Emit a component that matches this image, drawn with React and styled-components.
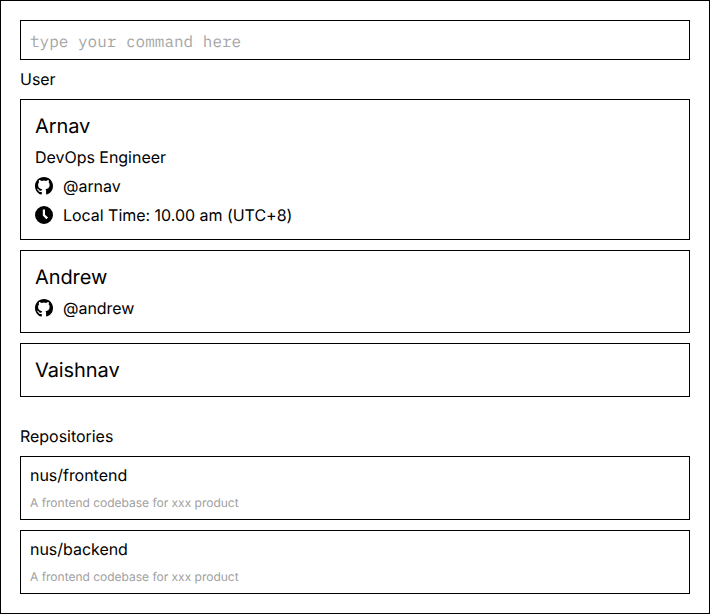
import React from "react";
import styled, { createGlobalStyle } from "styled-components";

const GlobalStyle = createGlobalStyle`
  * { box-sizing: border-box; }
  body { margin: 0; background: #fff; }
`;

const Page = styled.main`
  width: 710px;
  height: 614px;
  padding: 19px;
  border: 1px solid #000;
  background: #fff;
  color: #000;
  font: 400 16px/19px Inter, sans-serif;
  letter-spacing: -0.03px;
  text-rendering: geometricPrecision;
`;

const CommandInput = styled.input`
  display: block;
  width: 100%;
  height: 40px;
  padding: 4px 9px 0;
  border: 1px solid #000;
  border-radius: 0;
  outline: none;
  background: #fff;
  font: 400 16px/21px "IBM Plex Mono", "Liberation Mono", monospace;
  text-rendering: geometricPrecision;
  &::placeholder { color: #a6a6a6; opacity: 1; }
`;

const Section = styled.section`
  margin-top: ${(p) => p.$gap}px;
`;

const SectionTitle = styled.h2`
  margin: 0 0 10px;
  font: inherit;
`;

const List = styled.div`
  display: grid;
  gap: 10px;
`;

const UserCard = styled.article`
  display: flex;
  flex-direction: column;
  gap: 10px;
  padding: 14px;
  border: 1px solid #000;
`;

const UserName = styled.h3`
  margin: 0;
  font-size: 20px;
  font-weight: 400;
  line-height: 24px;
  letter-spacing: -0.08px;
`;

const Detail = styled.div`
  display: flex;
  align-items: flex-start;
  gap: 10px;
  height: 19px;
`;

const Icon = styled.svg`
  width: 18px;
  height: 18px;
  flex: none;
  fill: #000;
`;

const RepoCard = styled.article`
  height: 64px;
  padding: 9px;
  border: 1px solid #000;
`;

const RepoName = styled.h3`
  margin: 0 0 10px;
  font: inherit;
`;

const RepoText = styled.p`
  margin: 0;
  color: #a0a0a0;
  font-size: 12px;
  line-height: 15px;
  letter-spacing: -0.01px;
`;

const GithubIcon = () => (
  <Icon viewBox="0 0 18 18">
    <path d="M9 0C3.9 0 0 3.9 0 8.9c0 4 2.6 7.5 6.2 8.7.5.1.6-.2.6-.5v-2.2c-2.5.5-3.1-.7-3.3-1.2-.2-.4-.6-1.1-1-1.3-.3-.2-.8-.6 0-.6.7 0 1.2.7 1.4.9.8 1.4 2.1 1 2.7.7.1-.6.3-1 .6-1.2-2-.3-4.1-1-4.1-4.4 0-1 .3-1.8.9-2.4-.1-.3-.4-1.2.1-2.4 0 0 .8-.2 2.5.9a8.3 8.3 0 0 1 4.5 0c1.7-1.2 2.5-.9 2.5-.9.5 1.2.2 2.1.1 2.4.6.6.9 1.4.9 2.4 0 3.4-2.1 4.2-4.1 4.4.3.3.6.8.6 1.6v3.3c0 .3.2.6.7.5A9 9 0 0 0 18 8.9C18 3.9 14 0 9 0z" />
  </Icon>
);

const ClockIcon = () => (
  <Icon viewBox="0 0 18 18">
    <path fillRule="evenodd" d="M9 0a9 9 0 1 1 0 18A9 9 0 0 1 9 0zM7.8 3.5v6.1l3.5 3.7 1.8-1.8L10 8.7V3.5z" />
  </Icon>
);

const users = [
  { name: "Arnav", role: "DevOps Engineer", github: "@arnav", time: "Local Time: 10.00 am (UTC+8)" },
  { name: "Andrew", github: "@andrew" },
  { name: "Vaishnav" },
];

const repos = [
  { name: "nus/frontend", text: "A frontend codebase for xxx product" },
  { name: "nus/backend", text: "A frontend codebase for xxx product" },
];

export default function App() {
  return (
    <Page>
      <GlobalStyle />
      <CommandInput placeholder="type your command here" />
      <Section $gap={10}>
        <SectionTitle>User</SectionTitle>
        <List>
          {users.map((u) => (
            <UserCard key={u.name}>
              <UserName>{u.name}</UserName>
              {u.role && <Detail>{u.role}</Detail>}
              {u.github && <Detail><GithubIcon />{u.github}</Detail>}
              {u.time && <Detail><ClockIcon />{u.time}</Detail>}
            </UserCard>
          ))}
        </List>
      </Section>
      <Section $gap={30}>
        <SectionTitle>Repositories</SectionTitle>
        <List>
          {repos.map((r) => (
            <RepoCard key={r.name}>
              <RepoName>{r.name}</RepoName>
              <RepoText>{r.text}</RepoText>
            </RepoCard>
          ))}
        </List>
      </Section>
    </Page>
  );
}
